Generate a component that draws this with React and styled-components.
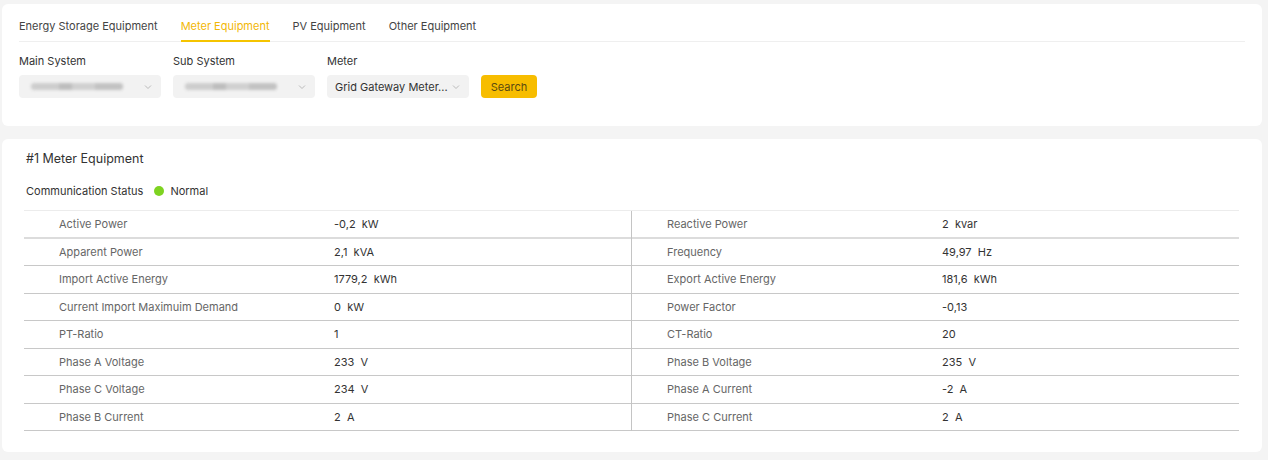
import styled, { createGlobalStyle } from 'styled-components'

const GlobalStyle = createGlobalStyle`
  html, body {
    margin: 0;
    padding: 0;
    background: #f4f4f4;
    font-family: Inter, "Open Sans", sans-serif;
    color: #333;
  }
`

const Page = styled.div`
  width: 1268px;
  height: 460px;
  box-sizing: border-box;
  padding: 4px 6px 0 2px;
  display: flex;
  flex-direction: column;
  gap: 13px;
`

const Card = styled.div`
  background: #fff;
  border-radius: 6px;
  box-sizing: border-box;
  height: ${p => p.$height}px;
`

const FilterCard = styled(Card)`
  padding: 0 17px;
`

const TabBar = styled.div`
  display: flex;
  gap: 23px;
  height: 37px;
  border-bottom: 1px solid #efefef;
`

const Tab = styled.div`
  font-size: 11px;
  display: flex;
  align-items: center;
  padding-top: 7px;
  box-sizing: border-box;
  color: ${p => (p.$active ? '#f2b705' : '#444')};
  border-bottom: 2px solid ${p => (p.$active ? '#f5c400' : 'transparent')};
  margin-bottom: -1px;
`

const FilterRow = styled.div`
  display: flex;
  align-items: flex-end;
  gap: 12px;
  margin-top: 12px;
`

const Field = styled.div`
  display: flex;
  flex-direction: column;
  gap: 7px;
`

const FieldLabel = styled.span`
  font-size: 11px;
  color: #333;
`

const Select = styled.div`
  width: 142px;
  height: 23px;
  border-radius: 4px;
  background: #f2f2f2;
  display: flex;
  align-items: center;
  justify-content: space-between;
  padding: 0 8px 0 8px;
  box-sizing: border-box;
  font-size: 11px;
  color: #333;
`

const Blurred = styled.span`
  display: block;
  width: ${p => p.$width}px;
  height: 7px;
  margin-left: 4px;
  background: linear-gradient(90deg, #cdcdcd 0 30%, #bdbdbd 30% 45%, #d0d0d0 45% 70%, #c2c2c2 70% 100%);
  border-radius: 3px;
  filter: blur(1.5px);
`

const SearchButton = styled.button`
  width: 56px;
  height: 23px;
  border: none;
  border-radius: 4px;
  background: #f7bd00;
  color: #5a4a10;
  font-family: inherit;
  font-size: 11px;
  padding: 0;
`

const DetailCard = styled(Card)`
  padding: 13px 23px 0 22px;
`

const Title = styled.div`
  font-size: 12.5px;
  color: #333;
  margin-left: 2px;
  height: 14px;
  line-height: 14px;
`

const Status = styled.div`
  display: flex;
  align-items: center;
  font-size: 11px;
  color: #333;
  margin: 18px 0 0 2px;
  height: 14px;
`

const Dot = styled.span`
  width: 10px;
  height: 10px;
  border-radius: 50%;
  background: #7ed321;
  margin: 0 6px 0 11px;
`

const Table = styled.div`
  margin-top: 12px;
  border-top: 1px solid #ececec;
  display: grid;
  grid-template-columns: 607px 1fr;
`

const Half = styled.div`
  display: flex;
  flex-direction: column;
  border-left: ${p => (p.$right ? '1px solid #c4c4c4' : 'none')};
`

const Row = styled.div`
  display: grid;
  grid-template-columns: 275px 1fr;
  height: 27.5px;
  box-sizing: border-box;
  align-items: center;
  border-bottom: ${p => (p.$first ? '2px solid #dcdcdc' : '1px solid #c8c8c8')};
  font-size: 11px;
`

const Label = styled.span`
  padding-left: 35px;
  color: #666;
`

const Value = styled.span`
  padding-left: 35px;
  color: #333;
  white-space: pre;
`

const Chevron = () => (
  <svg width="10" height="10" viewBox="0 0 10 10" fill="none">
    <path d="M2 3.5 L5 6.5 L8 3.5" stroke="#bbb" strokeWidth="1" />
  </svg>
)

const left = [
  ['Active Power', '-0,2  kW'],
  ['Apparent Power', '2,1  kVA'],
  ['Import Active Energy', '1779,2  kWh'],
  ['Current Import Maximuim Demand', '0  kW'],
  ['PT-Ratio', '1'],
  ['Phase A Voltage', '233  V'],
  ['Phase C Voltage', '234  V'],
  ['Phase B Current', '2  A']
]

const right = [
  ['Reactive Power', '2  kvar'],
  ['Frequency', '49,97  Hz'],
  ['Export Active Energy', '181,6  kWh'],
  ['Power Factor', '-0,13'],
  ['CT-Ratio', '20'],
  ['Phase B Voltage', '235  V'],
  ['Phase A Current', '-2  A'],
  ['Phase C Current', '2  A']
]

const tabs = ['Energy Storage Equipment', 'Meter Equipment', 'PV Equipment', 'Other Equipment']

const App = () => (
  <Page>
    <GlobalStyle />
    <FilterCard $height={122}>
      <TabBar>
        {tabs.map(t => (
          <Tab key={t} $active={t === 'Meter Equipment'}>
            {t}
          </Tab>
        ))}
      </TabBar>
      <FilterRow>
        <Field>
          <FieldLabel>Main System</FieldLabel>
          <Select>
            <Blurred $width={92} />
            <Chevron />
          </Select>
        </Field>
        <Field>
          <FieldLabel>Sub System</FieldLabel>
          <Select>
            <Blurred $width={92} />
            <Chevron />
          </Select>
        </Field>
        <Field>
          <FieldLabel>Meter</FieldLabel>
          <Select>
            <span>Grid Gateway Meter...</span>
            <Chevron />
          </Select>
        </Field>
        <SearchButton type="button">Search</SearchButton>
      </FilterRow>
    </FilterCard>
    <DetailCard $height={313}>
      <Title>#1 Meter Equipment</Title>
      <Status>
        Communication Status
        <Dot />
        Normal
      </Status>
      <Table>
        {[left, right].map((rows, i) => (
          <Half key={i} $right={i === 1}>
            {rows.map(([label, value], j) => (
              <Row key={label} $first={j === 0}>
                <Label>{label}</Label>
                <Value>{value}</Value>
              </Row>
            ))}
          </Half>
        ))}
      </Table>
    </DetailCard>
  </Page>
)

export default App
